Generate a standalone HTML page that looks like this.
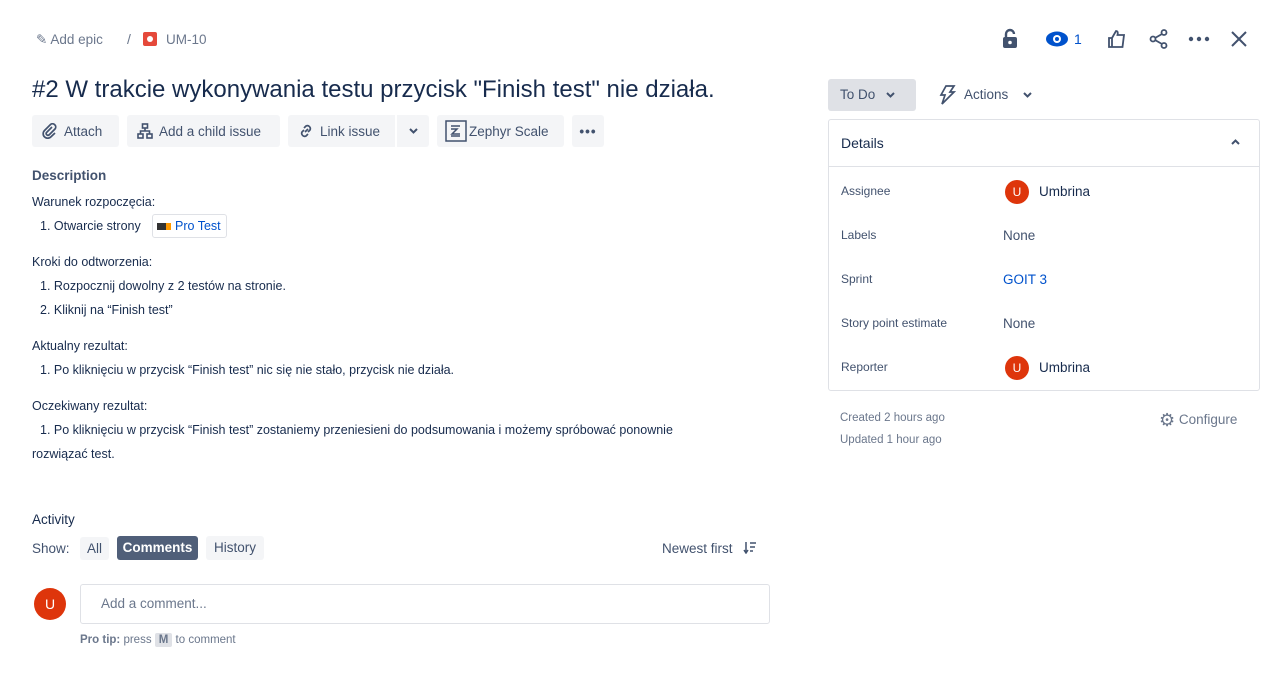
<!DOCTYPE html>
<html><head><meta charset="utf-8"><style>
*{box-sizing:border-box;margin:0;padding:0}
body{width:1279px;height:678px;background:#fff;font-family:"Liberation Sans",sans-serif;color:#172b4d;position:relative;overflow:hidden;font-size:13px}
.a{position:absolute;white-space:nowrap}
.btn{position:absolute;top:115px;height:32px;background:#f4f5f7;border-radius:3px;color:#42526e;font-size:13.5px;display:flex;align-items:center;padding:0 10px;gap:6px}
.lbl{position:absolute;left:841px;font-size:12px;color:#42526e}
.val{position:absolute;left:1003px;font-size:13.5px;color:#42526e}
.av{position:absolute;width:24px;height:24px;border-radius:50%;background:#de350b;color:#fff;font-size:12px;display:flex;align-items:center;justify-content:center}
.t{position:absolute;font-size:12.5px;color:#172b4d;white-space:nowrap}
</style></head><body>
<svg style="position:absolute;left:0;width:0;height:0"><defs><path id="chev" d="M1 1l3.5 3.5L8 1" fill="none" stroke="#42526e" stroke-width="2"/></defs></svg>
<div class="a" style="left:36px;top:32px;font-size:13.5px;color:#6b778c">✎ Add epic</div>
<div class="a" style="left:127px;top:31px;font-size:14px;color:#6b778c">/</div>
<div class="a" style="left:143px;top:32px;width:14px;height:14px;background:#e5493a;border-radius:2px"><div style="position:absolute;left:4px;top:4px;width:6px;height:6px;border-radius:50%;background:#fff"></div></div>
<div class="a" style="left:166px;top:32px;font-size:13.5px;color:#6b778c">UM-10</div>
<div class="a" style="left:32px;top:76px;font-size:24px;color:#172b4d">#2 W trakcie wykonywania testu przycisk "Finish test" nie działa.</div>
<div class="btn" style="left:32px;width:87px"><svg width="16" height="16" viewBox="0 0 16 16" fill="none" stroke="#42526e" stroke-width="1.7"><path d="M10 4l-5.5 5.5a1.8 1.8 0 002.5 2.5L13 6a3.2 3.2 0 00-4.5-4.5L2.5 7.5a4.5 4.5 0 006.4 6.4L13 10"/></svg><span>Attach</span></div>
<div class="btn" style="left:127px;width:153px"><svg width="16" height="16" viewBox="0 0 16 16" fill="none" stroke="#42526e" stroke-width="1.6"><rect x="5.5" y="1" width="5" height="4"/><rect x="1" y="11" width="5" height="4"/><rect x="10" y="11" width="5" height="4"/><path d="M8 5v3M3.5 11V8h9v3"/></svg><span>Add a child issue</span></div>
<div class="btn" style="left:288px;width:107px;border-radius:3px 0 0 3px"><svg width="16" height="16" viewBox="0 0 16 16" fill="none" stroke="#42526e" stroke-width="1.7"><path d="M7 9l3-3M6 5l2-2a3 3 0 014 4l-2 2M10 11l-2 2a3 3 0 01-4-4l2-2"/></svg><span>Link issue</span></div>
<div class="btn" style="left:397px;width:32px;border-radius:0 3px 3px 0;justify-content:center"><svg width="9" height="6"><use href="#chev"/></svg></div>
<div class="btn" style="left:437px;width:127px;padding:0 8px;gap:2px"><svg width="22" height="22" viewBox="0 0 22 22" fill="none" stroke="#42526e" stroke-width="1.5"><rect x="1" y="1" width="20" height="20"/><path d="M6 6h9M6 9h6l-5 5h8M6 16h9"/></svg><span>Zephyr Scale</span></div>
<div class="btn" style="left:572px;width:32px;justify-content:center;font-weight:bold;letter-spacing:1px">•••</div>
<div class="a" style="left:32px;top:168px;font-size:13.5px;font-weight:bold;color:#42526e">Description</div>
<div class="t" style="left:32px;top:195px">Warunek rozpoczęcia:</div>
<div class="t" style="left:40px;top:219px">1. Otwarcie strony</div>
<div class="a" style="left:152px;top:214px;width:75px;height:24px;border:1px solid #dfe1e6;border-radius:3px;font-size:12.5px;color:#0052cc;padding:4px 0 0 4px"><span style="display:inline-block;width:14px;height:7px;background:#333;border-right:5px solid #f90;margin-right:4px"></span>Pro Test</div>
<div class="t" style="left:32px;top:255px">Kroki do odtworzenia:</div>
<div class="t" style="left:40px;top:279px">1. Rozpocznij dowolny z 2 testów na stronie.</div>
<div class="t" style="left:40px;top:303px">2. Kliknij na “Finish test”</div>
<div class="t" style="left:32px;top:339px">Aktualny rezultat:</div>
<div class="t" style="left:40px;top:363px">1. Po kliknięciu w przycisk “Finish test” nic się nie stało, przycisk nie działa.</div>
<div class="t" style="left:32px;top:399px">Oczekiwany rezultat:</div>
<div class="t" style="left:40px;top:423px">1. Po kliknięciu w przycisk “Finish test” zostaniemy przeniesieni do podsumowania i możemy spróbować ponownie</div>
<div class="t" style="left:32px;top:447px">rozwiązać test.</div>
<div class="a" style="left:32px;top:512px;font-size:13.5px;color:#172b4d">Activity</div>
<div class="a" style="left:32px;top:541px;font-size:13.5px;color:#42526e">Show:</div>
<div class="a" style="left:80px;top:537px;width:29px;height:23px;background:#f4f5f7;border-radius:3px;font-size:13.5px;color:#42526e;text-align:center;padding-top:4px">All</div>
<div class="a" style="left:117px;top:536px;width:81px;height:24px;background:#505f79;border-radius:3px;font-size:13.5px;color:#fff;text-align:center;padding-top:4px;font-weight:bold">Comments</div>
<div class="a" style="left:206px;top:536px;width:58px;height:24px;background:#f4f5f7;border-radius:3px;font-size:13.5px;color:#42526e;text-align:center;padding-top:4px">History</div>
<div class="a" style="left:662px;top:541px;font-size:13.5px;color:#42526e">Newest first</div>
<svg class="a" style="left:743px;top:542px" width="14" height="12" viewBox="0 0 14 12" fill="none" stroke="#42526e" stroke-width="1.5"><path d="M3 0v10M1 8l2 3 2-3M7 1h6M7 5h5M7 9h3"/></svg>
<div class="av" style="left:34px;top:588px;width:32px;height:32px;font-size:14px">U</div>
<div class="a" style="left:80px;top:584px;width:690px;height:40px;border:1px solid #dfe1e6;border-radius:3px;font-size:13.5px;color:#6b778c;padding:11px 0 0 20px">Add a comment...</div>
<div class="a" style="left:80px;top:634px;font-size:11.5px;color:#6b778c"><b>Pro tip:</b> press <span style="background:#dfe1e6;padding:1px 4px;border-radius:2px;font-weight:bold">M</span> to comment</div>

<svg class="a" style="left:1000px;top:28px" width="20" height="22" viewBox="0 0 20 22"><path d="M6 9V6a4 4 0 018 0" fill="none" stroke="#42526e" stroke-width="2.4"/><rect x="3" y="9" width="14" height="11" rx="2" fill="#42526e"/><circle cx="10" cy="14.5" r="1.8" fill="#fff"/></svg>
<svg class="a" style="left:1045px;top:30px" width="24" height="18" viewBox="0 0 24 18"><ellipse cx="12" cy="9" rx="11" ry="7.5" fill="#0052cc"/><circle cx="12" cy="9" r="4" fill="#fff"/><circle cx="12" cy="9" r="2" fill="#0052cc"/></svg>
<div class="a" style="left:1074px;top:31px;font-size:14px;color:#0052cc">1</div>
<svg class="a" style="left:1107px;top:29px" width="20" height="20" viewBox="0 0 20 20" fill="none" stroke="#42526e" stroke-width="1.8"><path d="M2 9h3v9H2zM5 9l4-7c2 0 2 2 1.5 4H17l-1.5 12H5"/></svg>
<svg class="a" style="left:1148px;top:28px" width="22" height="22" viewBox="0 0 22 22" fill="none" stroke="#42526e" stroke-width="1.8"><circle cx="5" cy="11" r="2.5"/><circle cx="16" cy="4.5" r="2.5"/><circle cx="16" cy="17.5" r="2.5"/><path d="M7 10l7-4M7 12l7 4"/></svg>
<svg class="a" style="left:1188px;top:36px" width="22" height="6"><circle cx="3" cy="3" r="2.2" fill="#42526e"/><circle cx="11" cy="3" r="2.2" fill="#42526e"/><circle cx="19" cy="3" r="2.2" fill="#42526e"/></svg>
<svg class="a" style="left:1230px;top:30px" width="18" height="18" viewBox="0 0 18 18" stroke="#42526e" stroke-width="2"><path d="M2 2l14 14M16 2L2 16"/></svg>

<div class="a" style="left:828px;top:79px;width:88px;height:32px;background:#dfe1e6;border-radius:3px;font-size:13.5px;color:#42526e;padding:8px 0 0 12px">To Do</div>
<svg class="a" style="left:886px;top:92px" width="9" height="6"><use href="#chev"/></svg>
<svg class="a" style="left:938px;top:85px" width="18" height="20" viewBox="0 0 18 20" fill="none" stroke="#42526e" stroke-width="1.7"><path d="M8 1h8l-4 6h4L4 19l3-9H3z"/></svg>
<div class="a" style="left:964px;top:87px;font-size:13.5px;color:#42526e">Actions</div>
<svg class="a" style="left:1023px;top:92px" width="9" height="6"><use href="#chev"/></svg>
<div class="a" style="left:828px;top:119px;width:432px;height:272px;border:1px solid #dfe1e6;border-radius:3px"></div>
<div class="a" style="left:829px;top:166px;width:430px;height:1px;background:#dfe1e6"></div>
<div class="a" style="left:841px;top:135px;font-size:14px;color:#172b4d">Details</div>
<svg class="a" style="left:1231px;top:139px" width="9" height="6" style="transform:rotate(180deg)"><path d="M1 5l3.5-3.5L8 5" fill="none" stroke="#42526e" stroke-width="2"/></svg>
<div class="lbl" style="top:184px">Assignee</div><div class="av" style="left:1005px;top:180px">U</div><div class="val" style="left:1039px;top:184px;color:#172b4d">Umbrina</div>
<div class="lbl" style="top:228px">Labels</div><div class="val" style="top:228px">None</div>
<div class="lbl" style="top:272px">Sprint</div><div class="val" style="top:272px;color:#0052cc">GOIT 3</div>
<div class="lbl" style="top:316px">Story point estimate</div><div class="val" style="top:316px">None</div>
<div class="lbl" style="top:360px">Reporter</div><div class="av" style="left:1005px;top:356px">U</div><div class="val" style="left:1039px;top:360px;color:#172b4d">Umbrina</div>
<div class="a" style="left:840px;top:412px;font-size:11.5px;color:#6b778c">Created 2 hours ago</div>
<div class="a" style="left:840px;top:434px;font-size:11.5px;color:#6b778c">Updated 1 hour ago</div>
<div class="a" style="left:1159px;top:410px;font-size:13.5px;color:#6b778c"><span style="font-size:18px;vertical-align:-2px">⚙</span> Configure</div>
</body></html>
